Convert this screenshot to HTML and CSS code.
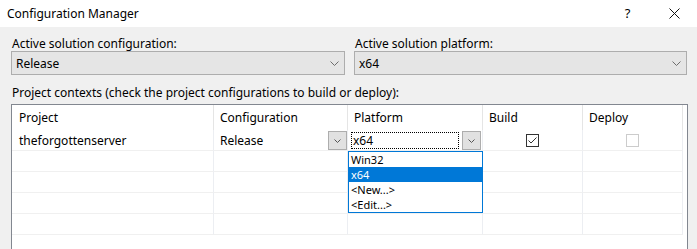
FILE: index.html
```html
<!DOCTYPE html>
<html lang="en">
<head>
  <meta charset="UTF-8">
  <title>Configuration Manager</title>
  <link rel="stylesheet" href="styles.css">
</head>
<body>
  <div class="window">
    <div class="titlebar">
      <span class="title">Configuration Manager</span>
      <span class="help">?</span>
      <span class="close">
        <svg width="11" height="11" viewBox="0 0 11 11"><path d="M0.5 0.5 L10.5 10.5 M10.5 0.5 L0.5 10.5" stroke="#111" stroke-width="1" fill="none"/></svg>
      </span>
    </div>

    <div class="content">
      <div class="solution">
        <div class="field">
          <div class="label">Active solution configuration:</div>
          <div class="combo">
            <span>Release</span>
            <svg class="chev" width="9" height="5" viewBox="0 0 9 5"><path d="M0.5 0.5 L4.5 4.5 L8.5 0.5" stroke="#6d6d6d" fill="none"/></svg>
          </div>
        </div>
        <div class="field">
          <div class="label">Active solution platform:</div>
          <div class="combo">
            <span>x64</span>
            <svg class="chev" width="9" height="5" viewBox="0 0 9 5"><path d="M0.5 0.5 L4.5 4.5 L8.5 0.5" stroke="#6d6d6d" fill="none"/></svg>
          </div>
        </div>
      </div>

      <div class="label contexts">Project contexts (check the project configurations to build or deploy):</div>

      <div class="grid">
        <div class="row header">
          <div class="cell">Project</div>
          <div class="cell">Configuration</div>
          <div class="cell">Platform</div>
          <div class="cell">Build</div>
          <div class="cell">Deploy</div>
          <div class="cell filler"></div>
        </div>

        <div class="row first">
          <div class="cell">theforgottenserver</div>
          <div class="cell edit">
            <span class="value">Release</span>
            <span class="drop-btn">
              <svg width="7" height="4" viewBox="0 0 7 4"><path d="M0.5 0.5 L3.5 3.5 L6.5 0.5" stroke="#555" fill="none"/></svg>
            </span>
          </div>
          <div class="cell edit platform">
            <span class="value focused">x64</span>
            <span class="drop-btn">
              <svg width="7" height="4" viewBox="0 0 7 4"><path d="M0.5 0.5 L3.5 3.5 L6.5 0.5" stroke="#555" fill="none"/></svg>
            </span>
            <ul class="dropdown">
              <li>Win32</li>
              <li class="selected">x64</li>
              <li>&lt;New...&gt;</li>
              <li>&lt;Edit...&gt;</li>
            </ul>
          </div>
          <div class="cell check">
            <span class="checkbox checked">
              <svg width="11" height="11" viewBox="0 0 11 11"><path d="M1.5 5.5 L4 8 L9.5 2.5" stroke="#333" fill="none"/></svg>
            </span>
          </div>
          <div class="cell check">
            <span class="checkbox disabled"></span>
          </div>
          <div class="cell filler"></div>
        </div>

        <div class="row"><div class="cell"></div><div class="cell"></div><div class="cell"></div><div class="cell"></div><div class="cell"></div><div class="cell filler"></div></div>
        <div class="row"><div class="cell"></div><div class="cell"></div><div class="cell"></div><div class="cell"></div><div class="cell"></div><div class="cell filler"></div></div>
        <div class="row"><div class="cell"></div><div class="cell"></div><div class="cell"></div><div class="cell"></div><div class="cell"></div><div class="cell filler"></div></div>
        <div class="row"><div class="cell"></div><div class="cell"></div><div class="cell"></div><div class="cell"></div><div class="cell"></div><div class="cell filler"></div></div>
      </div>
    </div>
  </div>
</body>
</html>
```

FILE: styles.css
```css
body {
  margin: 0;
  padding: 0;
  font-family: "Noto Sans", "Liberation Sans", sans-serif;
  font-size: 12px;
  line-height: 15px;
  color: #000;
  background: #f0f0f0;
}

.window {
  width: 697px;
  height: 249px;
  overflow: hidden;
  background: #f0f0f0;
}

/* barra de titulo */
.titlebar {
  height: 27px;
  background: #fff;
  display: flex;
  align-items: center;
}
.title {
  padding-left: 7px;
  flex: 1;
}
.help {
  width: 45px;
  text-align: center;
  font-size: 13px;
}
.close {
  width: 45px;
  display: flex;
  justify-content: center;
  padding-left: 2px;
}

.content {
  padding: 0 9px 0 11px;
}

.solution {
  display: grid;
  grid-template-columns: 334px 333px;
  column-gap: 9px;
}
.field {
  padding-top: 9px;
}
.label {
  height: 15px;
  line-height: 15px;
  padding-left: 1px;
}
.combo {
  height: 22px;
  border: 1px solid #adadad;
  background: #e5e5e5;
  display: flex;
  align-items: center;
  justify-content: space-between;
  padding: 0 5px 0 4px;
}

.contexts {
  margin-top: 10px;
  margin-bottom: 4px;
}

/* grade de projetos */
.grid {
  width: 675px;
  height: 200px;
  border: 1px solid #828790;
  background: #fff;
}
.row {
  display: grid;
  grid-template-columns: 202px 134px 135px 100px 100px 1fr;
  height: 21px;
}
.row .cell {
  border-right: 1px solid #eceef2;
  border-bottom: 1px solid #f0f0f0;
  padding-left: 6px;
  display: flex;
  align-items: center;
  position: relative;
}
.row .cell:first-child {
  padding-left: 7px;
}
.row .filler {
  border-right: none;
  border-bottom: none;
}
.header {
  height: 25px;
}
.header .cell {
  border-right: 1px solid #e5e5e5;
  border-bottom: none;
}
.header .filler {
  border-right: none;
}
.first .cell {
  padding-top: 1px;
}

.edit {
  justify-content: space-between;
}
.drop-btn {
  width: 17px;
  height: 17px;
  border: 1px solid #adadad;
  background: #e1e1e1;
  display: flex;
  align-items: center;
  justify-content: center;
}
.platform {
  padding-left: 3px !important;
}
.platform .drop-btn {
  margin-right: 1px;
}
.focused {
  width: 105px;
  height: 15px;
  line-height: 15px;
  border: 1px dotted #000;
  padding-left: 1px;
}

.dropdown {
  position: absolute;
  left: 0;
  top: 21px;
  width: 133px;
  margin: 0;
  padding: 0;
  list-style: none;
  border: 1px solid #0078d7;
  background: #fff;
  z-index: 2;
}
.dropdown li {
  height: 15px;
  line-height: 15px;
  font-size: 11px;
  padding-left: 2px;
}
.dropdown .selected {
  background: #0078d7;
  color: #fff;
}

.check {
  justify-content: center;
  padding-left: 0 !important;
}
.checkbox {
  width: 11px;
  height: 11px;
  border: 1px solid #333;
  background: #fff;
  display: flex;
}
.checkbox.disabled {
  border-color: #cccccc;
}
```
